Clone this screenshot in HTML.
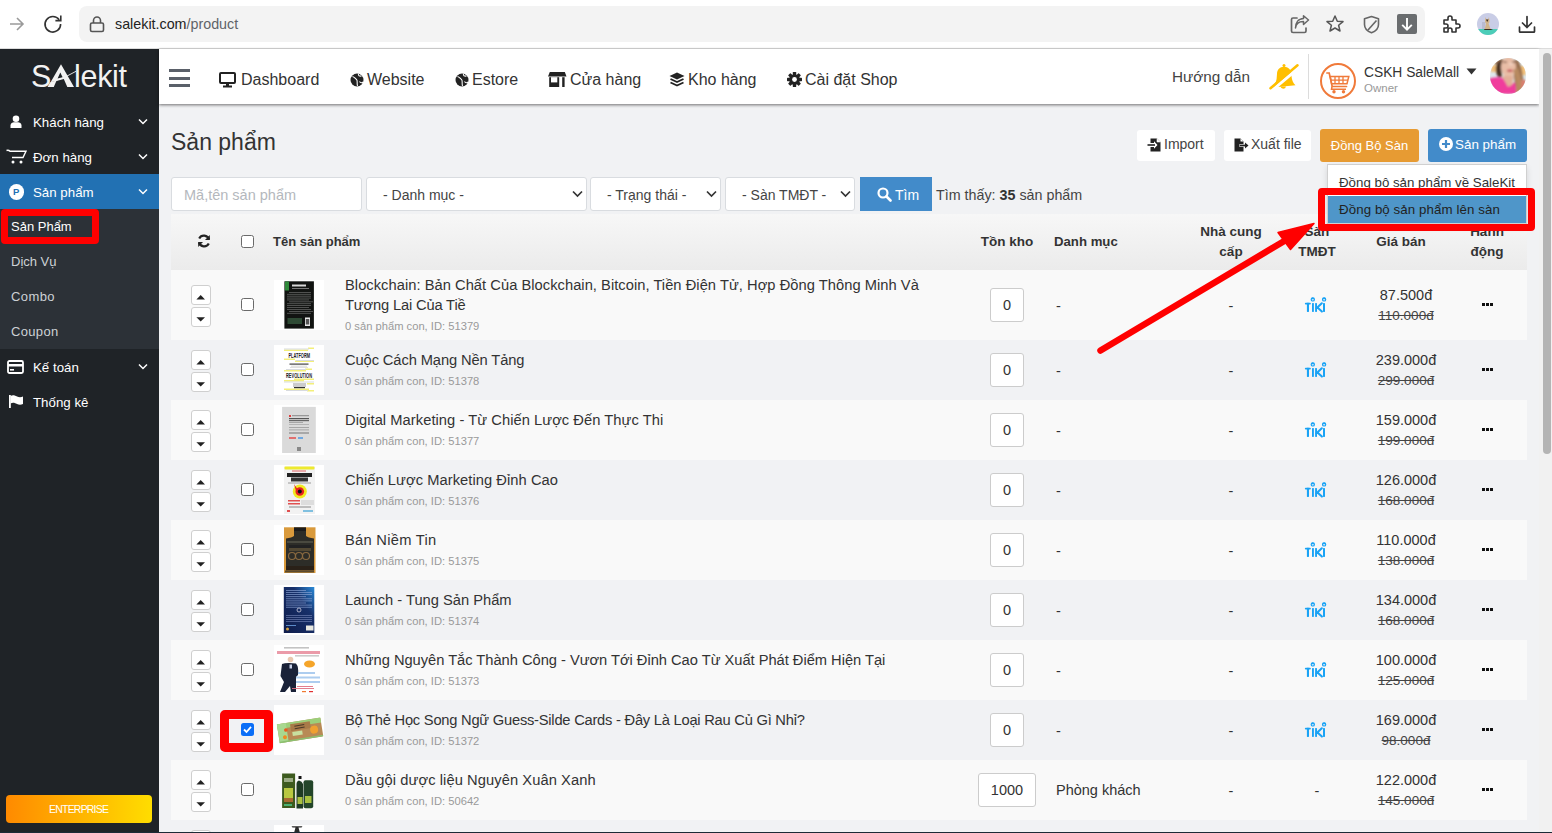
<!DOCTYPE html><html><head><meta charset="utf-8"><style>
*{box-sizing:border-box;margin:0;padding:0}
html,body{width:1552px;height:833px;overflow:hidden;font-family:"Liberation Sans",sans-serif;color:#333;background:#f1f2f4;position:relative}
.a{position:absolute;white-space:nowrap}
svg{display:block}
</style></head><body>
<div class="a" style="left:0;top:0;width:1552px;height:49px;background:#fff;border-bottom:1px solid #dcdcdc"></div>
<div class="a" style="left:79px;top:6px;width:1346px;height:36px;background:#f3f3f3;border-radius:8px"></div>
<svg class="a" style="left:9px;top:16px" width="16" height="16" viewBox="0 0 16 16"><path d="M1 8H14M8 2L14 8L8 14" stroke="#9a9a9a" stroke-width="1.6" fill="none"/></svg>
<svg class="a" style="left:43px;top:14px" width="20" height="20" viewBox="0 0 20 20"><path d="M16.2 5.8A7.8 7.8 0 1 0 17.6 10" stroke="#333" stroke-width="1.6" fill="none"/><path d="M12.4 6.6H17.8V1.4" stroke="#333" stroke-width="1.6" fill="none"/></svg>
<svg class="a" style="left:89px;top:15px" width="16" height="18" viewBox="0 0 16 18"><rect x="1.5" y="8" width="13" height="8.5" rx="1.5" stroke="#555" stroke-width="1.6" fill="none"/><path d="M4.5 8V5.5A3.5 3.5 0 0 1 11.5 5.5V8" stroke="#555" stroke-width="1.6" fill="none"/></svg>
<div class="a" style="left:115px;top:15px;font-size:14.3px;line-height:18px;color:#222">salekit.com<span style="color:#5f6368">/product</span></div>
<svg class="a" style="left:1290px;top:15px" width="20" height="19" viewBox="0 0 20 19"><path d="M7 3H3Q1.5 3 1.5 4.5V16Q1.5 17.5 3 17.5H14.5Q16 17.5 16 16V13" stroke="#666" stroke-width="1.7" fill="none" stroke-linecap="round"/><path d="M5.5 13C6 8.5 9 6.5 13.5 6.5V9.5L18.5 5L13.5 0.8V3.6C8 3.8 5.5 8 5.5 13Z" stroke="#666" stroke-width="1.5" fill="none" stroke-linejoin="round"/></svg>
<svg class="a" style="left:1325px;top:14px" width="20" height="20" viewBox="0 0 20 20"><path d="M10 2L12.3 7.2L18 7.6L13.6 11.3L15 17L10 14L5 17L6.4 11.3L2 7.6L7.7 7.2Z" stroke="#555" stroke-width="1.5" fill="none" stroke-linejoin="round"/></svg>
<svg class="a" style="left:1363px;top:15px" width="18" height="19" viewBox="0 0 18 19"><path d="M8.5 1.5L15.5 3.8V9.5C15.5 13.5 12.5 16.3 8.5 17.8C4.5 16.3 1.5 13.5 1.5 9.5V3.8Z" stroke="#666" stroke-width="1.6" fill="none" stroke-linejoin="round"/><path d="M13.5 5.5L5 15" stroke="#666" stroke-width="1.6"/></svg>
<div class="a" style="left:1397px;top:14px;width:20px;height:20px;background:#6a6d6f;border-radius:2px"></div>
<svg class="a" style="left:1399px;top:16px" width="16" height="16" viewBox="0 0 16 16"><path d="M8 2V13.5M3.2 8.8L8 13.6L12.8 8.8" stroke="#fff" stroke-width="1.9" fill="none"/></svg>
<svg class="a" style="left:1440px;top:13px" width="22" height="22" viewBox="0 0 22 22"><path d="M4 7H8V5A2 2 0 0 1 12 5V7H16V11H18A2 2 0 0 1 18 15H16V19H12V17A2 2 0 0 0 8 17V19H4V15H6A2 2 0 0 0 6 11H4Z" stroke="#333" stroke-width="1.6" fill="none" stroke-linejoin="round"/></svg>
<svg class="a" style="left:1477px;top:13px" width="22" height="22" viewBox="0 0 22 22"><defs><clipPath id="cc"><circle cx="11" cy="11" r="11"/></clipPath></defs><g clip-path="url(#cc)"><rect width="22" height="22" fill="#c9cde6"/><rect y="16" width="22" height="6" fill="#4ccdb8"/><path d="M8.5 4L9.5 6.5H11L12 4L12.5 8Q12.5 10 11.5 10.5L14 17H7.5L9 10.5Q8 10 8 8Z" fill="#d2b48a"/><path d="M9 6.5L10.2 9L11.5 6.5Z" fill="#3a2a1a"/><path d="M7.5 16L14 16L16 17H7Z" fill="#3a2e22"/><rect x="5" y="9" width="3" height="7" fill="#aab" opacity=".5"/></g></svg>
<svg class="a" style="left:1517px;top:15px" width="20" height="19" viewBox="0 0 20 19"><path d="M10 1.5V12.5M5.5 8L10 12.5L14.5 8M2.5 12V16.5Q2.5 17.2 3.2 17.2H16.8Q17.5 17.2 17.5 16.5V12" stroke="#333" stroke-width="1.7" fill="none" stroke-linecap="round" stroke-linejoin="round"/></svg>
<div class="a" style="left:0;top:49px;width:159px;height:784px;background:#1f2327"></div>
<div class="a" style="left:31px;top:59px;font-size:30.5px;line-height:34px;color:#f2f2f2;letter-spacing:-0.3px">S</div>
<div class="a" style="left:74px;top:59px;font-size:30.5px;line-height:34px;color:#f2f2f2;letter-spacing:-0.3px">lekit</div>
<svg class="a" style="left:40px;top:60px" width="40" height="30" viewBox="40 60 40 30"><path d="M61 64.2L74 87L67.3 87L63.8 79L55.5 81.3L51 81.5ZM60.3 72.5L57.6 78.6L62.6 77.3Z" fill="#f2f2f2" fill-rule="evenodd"/><path d="M50.2 82.3L56.6 80.6L53.8 87L47.5 87Z" fill="#f2f2f2"/><path d="M51 81.8Q64 79 76 71.3" stroke="#f2f2f2" stroke-width="0.9" fill="none"/></svg>
<svg class="a" style="left:10px;top:115px" width="12" height="13" viewBox="0 0 12 13"><circle cx="6" cy="3.8" r="3.3" fill="#fff"/><path d="M0.5 13V10.5C0.5 8.3 2.5 7.3 4 7.3H8C9.5 7.3 11.5 8.3 11.5 10.5V13Z" fill="#fff"/></svg>
<div class="a" style="left:33px;top:115px;font-size:13.3px;line-height:16px;color:#fff">Khách hàng</div>
<svg class="a" style="left:138px;top:118px" width="10" height="7" viewBox="0 0 10 7"><path d="M1 1.5L5 5.5L9 1.5" stroke="#fff" stroke-width="1.5" fill="none"/></svg>
<svg class="a" style="left:6px;top:149px" width="21" height="15" viewBox="0 0 21 15"><path d="M0.5 1.5C2 1 3 1.2 4 2.2H20L17 8.5H6" stroke="#fff" stroke-width="1.4" fill="none"/><circle cx="7" cy="13" r="1.5" fill="#fff"/><circle cx="15" cy="13" r="1.5" fill="#fff"/></svg>
<div class="a" style="left:33px;top:150px;font-size:13.3px;line-height:16px;color:#fff">Đơn hàng</div>
<svg class="a" style="left:138px;top:153px" width="10" height="7" viewBox="0 0 10 7"><path d="M1 1.5L5 5.5L9 1.5" stroke="#fff" stroke-width="1.5" fill="none"/></svg>
<div class="a" style="left:0;top:174px;width:159px;height:35px;background:#2271b3"></div>
<div class="a" style="left:8.5px;top:184px;width:15.5px;height:15.5px;border-radius:50%;background:#fff;color:#2271b3;font-size:9.5px;font-weight:bold;line-height:15.5px;text-align:center">P</div>
<div class="a" style="left:33px;top:185px;font-size:13.3px;line-height:16px;color:#fff">Sản phẩm</div>
<svg class="a" style="left:138px;top:188px" width="10" height="7" viewBox="0 0 10 7"><path d="M1 1.5L5 5.5L9 1.5" stroke="#fff" stroke-width="1.5" fill="none"/></svg>
<div class="a" style="left:0;top:209px;width:159px;height:140px;background:#2c3137"></div>
<div class="a" style="left:11px;top:219px;font-size:13px;line-height:16px;color:#fff;letter-spacing:0.00px">Sản Phẩm</div>
<div class="a" style="left:11px;top:254px;font-size:13px;line-height:16px;color:#cdd1d5;letter-spacing:0.00px">Dịch Vụ</div>
<div class="a" style="left:11px;top:289px;font-size:13px;line-height:16px;color:#cdd1d5;letter-spacing:0.42px">Combo</div>
<div class="a" style="left:11px;top:324px;font-size:13px;line-height:16px;color:#cdd1d5;letter-spacing:0.34px">Coupon</div>
<div class="a" style="left:1px;top:209px;width:98px;height:35px;border:7px solid #ff0000;border-radius:4px"></div>
<svg class="a" style="left:7px;top:360px" width="17" height="14" viewBox="0 0 17 14"><rect x="1" y="1" width="15" height="12" rx="1.5" stroke="#fff" stroke-width="1.8" fill="none"/><rect x="1" y="4" width="15" height="2.5" fill="#fff"/><rect x="3" y="9" width="4" height="1.6" fill="#fff"/></svg>
<div class="a" style="left:33px;top:360px;font-size:13.3px;line-height:16px;color:#fff">Kế toán</div>
<svg class="a" style="left:138px;top:363px" width="10" height="7" viewBox="0 0 10 7"><path d="M1 1.5L5 5.5L9 1.5" stroke="#fff" stroke-width="1.5" fill="none"/></svg>
<svg class="a" style="left:8px;top:394px" width="16" height="16" viewBox="0 0 16 16"><rect x="1" y="1" width="1.8" height="13" fill="#fff"/><path d="M2.5 2C5 0.5 7 1.5 9 2.5C11 3.5 13 3.5 15 2.5V10C13 11 11 11 9 10C7 9 5 8 2.5 9.5Z" fill="#fff"/></svg>
<div class="a" style="left:33px;top:395px;font-size:13.3px;line-height:16px;color:#fff">Thống kê</div>
<div class="a" style="left:6px;top:795px;width:146px;height:28px;border-radius:4px;background:linear-gradient(90deg,#ff8a00,#ffdd00);color:#fff;font-size:10.5px;line-height:28px;text-align:center;letter-spacing:-0.8px;text-indent:-0.8px">ENTERPRISE</div>
<div class="a" style="left:159px;top:49px;width:1380px;height:55px;background:#fff;box-shadow:0 1px 3px rgba(0,0,0,.55)"></div>
<div class="a" style="left:169px;top:69px;width:21px;height:3px;background:#5a6069"></div>
<div class="a" style="left:169px;top:77px;width:21px;height:3px;background:#5a6069"></div>
<div class="a" style="left:169px;top:84px;width:21px;height:3px;background:#5a6069"></div>
<div class="a" style="left:219.0px;top:72px"><svg width="17" height="16" viewBox="0 0 17 16"><rect x="1" y="1" width="15" height="10" rx="1" stroke="#222" stroke-width="2" fill="none"/><rect x="7" y="11" width="3" height="3" fill="#222"/><rect x="4" y="13.5" width="9" height="2" fill="#222"/></svg></div>
<div class="a" style="left:241px;top:70px;font-size:16px;line-height:19px;color:#333">Dashboard</div>
<div class="a" style="left:350.0px;top:73px"><svg width="14" height="14" viewBox="0 0 14 14"><circle cx="7" cy="7" r="6.5" fill="#222"/><path d="M2.5 3.5C4.5 4 5 5.5 6.5 6.5C8 7.5 6.5 10 7.5 13M8.5 1C8 2.5 9.5 3.5 11.5 3M9.5 8.5C10.5 10 12 10 13.2 9" stroke="#fff" stroke-width="1.1" fill="none"/></svg></div>
<div class="a" style="left:367px;top:70px;font-size:16px;line-height:19px;color:#333">Website</div>
<div class="a" style="left:455.0px;top:73px"><svg width="14" height="14" viewBox="0 0 14 14"><circle cx="7" cy="7" r="6.5" fill="#222"/><path d="M2.5 3.5C4.5 4 5 5.5 6.5 6.5C8 7.5 6.5 10 7.5 13M8.5 1C8 2.5 9.5 3.5 11.5 3M9.5 8.5C10.5 10 12 10 13.2 9" stroke="#fff" stroke-width="1.1" fill="none"/></svg></div>
<div class="a" style="left:472px;top:70px;font-size:16px;line-height:19px;color:#333">Estore</div>
<div class="a" style="left:547.5px;top:72px"><svg width="19" height="15" viewBox="0 0 19 15"><path d="M1.8 0H16.8L18.5 4.5H0Z" fill="#222"/><rect x="1.2" y="5.2" width="10" height="9.8" fill="#222"/><rect x="3" y="5.2" width="6.3" height="5.2" fill="#fff"/><rect x="14.2" y="5.2" width="2.4" height="9.8" fill="#222"/></svg></div>
<div class="a" style="left:570px;top:70px;font-size:16px;line-height:19px;color:#333">Cửa hàng</div>
<div class="a" style="left:669.0px;top:72px"><svg width="16" height="15" viewBox="0 0 16 15"><path d="M8 0.5L15.5 4L8 7.5L0.5 4Z" fill="#222"/><path d="M1.5 7L8 10L14.5 7M1.5 10.5L8 13.5L14.5 10.5" stroke="#222" stroke-width="1.9" fill="none" stroke-linejoin="round"/></svg></div>
<div class="a" style="left:688px;top:70px;font-size:16px;line-height:19px;color:#333">Kho hàng</div>
<div class="a" style="left:786.5px;top:72px"><svg width="15" height="15" viewBox="0 0 15 15"><g fill="#222"><circle cx="7.5" cy="7.5" r="5.3"/><rect x="5.8" y="0" width="3.4" height="3.5" rx="0.6" transform="rotate(0 7.5 7.5)"/><rect x="5.8" y="0" width="3.4" height="3.5" rx="0.6" transform="rotate(45 7.5 7.5)"/><rect x="5.8" y="0" width="3.4" height="3.5" rx="0.6" transform="rotate(90 7.5 7.5)"/><rect x="5.8" y="0" width="3.4" height="3.5" rx="0.6" transform="rotate(135 7.5 7.5)"/><rect x="5.8" y="0" width="3.4" height="3.5" rx="0.6" transform="rotate(180 7.5 7.5)"/><rect x="5.8" y="0" width="3.4" height="3.5" rx="0.6" transform="rotate(225 7.5 7.5)"/><rect x="5.8" y="0" width="3.4" height="3.5" rx="0.6" transform="rotate(270 7.5 7.5)"/><rect x="5.8" y="0" width="3.4" height="3.5" rx="0.6" transform="rotate(315 7.5 7.5)"/></g><circle cx="7.5" cy="7.5" r="2.4" fill="#fff"/></svg></div>
<div class="a" style="left:805px;top:70px;font-size:16px;line-height:19px;color:#333">Cài đặt Shop</div>
<div class="a" style="left:1172px;top:68px;font-size:15.3px;line-height:18px;color:#444">Hướng dẫn</div>
<svg class="a" style="left:1264px;top:60px" width="40" height="34" viewBox="0 0 40 34"><circle cx="20" cy="5.6" r="1.5" fill="#ffbf00"/><path d="M20 6.8C15.6 6.8 13.2 10 13 13.8L12.6 19C12.2 22.5 10 25 6.5 27.8L31.5 25.3C29 23 28 20 27.6 17L27.2 13.8C27 10 24.4 6.8 20 6.8Z" fill="#ffbf00"/><path d="M16.4 26.6A2.9 2.9 0 0 0 22 26.4Z" fill="#ffbf00"/><path d="M8.3 30.1L35.3 7.2" stroke="#fff" stroke-width="3.2"/><path d="M6.5 28.2L33.5 5.3" stroke="#ffbf00" stroke-width="2.5" stroke-linecap="round"/></svg>
<div class="a" style="left:1308px;top:54px;width:1px;height:45px;background:#dcdcdc"></div>
<div class="a" style="left:1320px;top:63px;width:36px;height:36px;border:2px solid #f07a3a;border-radius:50%"></div>
<svg class="a" style="left:1326px;top:71px" width="24" height="23" viewBox="0 0 24 23"><path d="M0.8 2H3.2L6.2 15.5H20.5" stroke="#f07a3a" stroke-width="1.7" fill="none" stroke-linecap="round"/><path d="M4.2 5.5H22.8L21 12.8H5.6Z" stroke="#f07a3a" stroke-width="1.5" fill="none"/><path d="M4.8 9.2H22M9 5.5V12.8M13 5.5V12.8M17 5.5V12.8" stroke="#f07a3a" stroke-width="1.3"/><path d="M6 15.5L5.5 18.3H20" stroke="#f07a3a" stroke-width="1.5" fill="none"/><circle cx="8" cy="20.8" r="1.7" fill="#f07a3a"/><circle cx="17.5" cy="20.8" r="1.7" fill="#f07a3a"/></svg>
<div class="a" style="left:1364px;top:64px;font-size:13.8px;line-height:17px;color:#333">CSKH SaleMall</div>
<div class="a" style="left:1364px;top:82px;font-size:11.5px;line-height:13px;color:#999">Owner</div>
<svg class="a" style="left:1466px;top:68px" width="11" height="7" viewBox="0 0 11 7"><path d="M0.5 0.5H10.5L5.5 6.5Z" fill="#333"/></svg>
<svg class="a" style="left:1490px;top:58px" width="36" height="36" viewBox="0 0 36 36"><defs><clipPath id="avc"><circle cx="18" cy="18" r="18"/></clipPath><filter id="bl"><feGaussianBlur stdDeviation="0.9"/></filter></defs><g clip-path="url(#avc)"><rect width="36" height="36" fill="#dfe9ec"/><g filter="url(#bl)"><rect x="1" y="7" width="5" height="7" fill="#f3c07a"/><rect x="30" y="8" width="6" height="9" fill="#f5c27a"/><path d="M4 6Q6 1 12 1L28 2Q32 8 33 20L36 30L36 36H26L24 18L22 8Z" fill="#9a7050"/><path d="M6 8Q8 3 12 2Q11 10 12 19L8 19Q5 14 6 8Z" fill="#4a3022"/><ellipse cx="18.5" cy="9" rx="7.5" ry="10.5" fill="#e9bda6"/><ellipse cx="19.8" cy="12.7" rx="3" ry="1.2" fill="#c8505a"/><ellipse cx="21" cy="6" rx="2" ry="1.6" fill="#f2d2c0"/><rect x="13" y="3.5" width="4" height="1.2" fill="#7a5a4a"/><rect x="22" y="3.5" width="4" height="1.2" fill="#7a5a4a"/><path d="M-2 21Q6 18 13 20L19 28L25 24L27 36H-2Z" fill="#f03c9c"/><path d="M12 18L24 18L22 27L18 29Z" fill="#e2b098"/><path d="M23 12Q27 20 26 36H33Q33 24 28 10Z" fill="#b88a60"/><rect x="31" y="22" width="5" height="9" fill="#d98070"/></g></g></svg>
<div class="a" style="left:1539px;top:49px;width:13px;height:784px;background:#f1f1f1"></div>
<div class="a" style="left:1543px;top:53px;width:8px;height:401px;background:#b4b4b4;border-radius:4px"></div>
<div class="a" style="left:171px;top:128px;font-size:23px;line-height:28px;color:#333">Sản phẩm</div>
<div class="a" style="left:1137px;top:130px;width:78px;height:31px;background:#fff;border-radius:3px"></div>
<svg class="a" style="left:1147px;top:137.5px" width="15" height="14" viewBox="0 0 15 14"><path d="M3.5 0.5H10L13.5 4V13.5H3.5V9H7V10.8L10.5 7L7 3.2V5H3.5Z" fill="#222"/><path d="M10 0.5V4H13.5" fill="#fff" stroke="#fff" stroke-width=".6"/><path d="M0.5 7H8" stroke="#222" stroke-width="1.6"/></svg>
<div class="a" style="left:1164px;top:136px;font-size:14px;line-height:16px;color:#444">Import</div>
<div class="a" style="left:1224px;top:130px;width:87px;height:31px;background:#fff;border-radius:3px"></div>
<svg class="a" style="left:1234px;top:137.5px" width="15" height="14" viewBox="0 0 15 14"><path d="M0.5 0.5H6.5L9.5 3.5V6H5.5V9H9.5V13.5H0.5Z" fill="#222"/><path d="M6.5 0.5V3.5H9.5" fill="#fff"/><path d="M6 7.5H12" stroke="#222" stroke-width="1.8"/><path d="M11 4.5L14.5 7.5L11 10.5Z" fill="#222"/></svg>
<div class="a" style="left:1251px;top:136px;font-size:14px;line-height:16px;color:#444">Xuất file</div>
<div class="a" style="left:1320px;top:129px;width:99px;height:33px;background:#e79b33;border-radius:3px;color:#fff;font-size:13px;line-height:33px;text-align:center">Đồng Bộ Sàn</div>
<div class="a" style="left:1428px;top:129px;width:99px;height:33px;background:#428bca;border-radius:3px"></div>
<svg class="a" style="left:1439px;top:137px" width="14" height="14" viewBox="0 0 14 14"><circle cx="7" cy="7" r="7" fill="#fff"/><path d="M7 3V11M3 7H11" stroke="#428bca" stroke-width="2.2"/></svg>
<div class="a" style="left:1455px;top:137px;font-size:13.4px;line-height:16px;color:#fff">Sản phẩm</div>
<div class="a" style="left:171px;top:177px;width:191px;height:34px;background:#fff;border:1px solid #d9dce0;border-radius:3px"></div>
<div class="a" style="left:184px;top:187px;font-size:14.5px;line-height:17px;color:#b4b8bd">Mã,tên sản phẩm</div>
<div class="a" style="left:366px;top:177px;width:221px;height:34px;background:#fff;border:1px solid #d9dce0;border-radius:3px"></div>
<div class="a" style="left:383px;top:187px;font-size:14px;line-height:17px;color:#444">- Danh mục -</div>
<svg class="a" style="left:572px;top:190px" width="11" height="8" viewBox="0 0 11 8"><path d="M1 1.5L5.5 6L10 1.5" stroke="#333" stroke-width="1.7" fill="none"/></svg>
<div class="a" style="left:590px;top:177px;width:131px;height:34px;background:#fff;border:1px solid #d9dce0;border-radius:3px"></div>
<div class="a" style="left:607px;top:187px;font-size:14px;line-height:17px;color:#444">- Trạng thái -</div>
<svg class="a" style="left:706px;top:190px" width="11" height="8" viewBox="0 0 11 8"><path d="M1 1.5L5.5 6L10 1.5" stroke="#333" stroke-width="1.7" fill="none"/></svg>
<div class="a" style="left:725px;top:177px;width:130px;height:34px;background:#fff;border:1px solid #d9dce0;border-radius:3px"></div>
<div class="a" style="left:742px;top:187px;font-size:14px;line-height:17px;color:#444">- Sàn TMĐT -</div>
<svg class="a" style="left:840px;top:190px" width="11" height="8" viewBox="0 0 11 8"><path d="M1 1.5L5.5 6L10 1.5" stroke="#333" stroke-width="1.7" fill="none"/></svg>
<div class="a" style="left:860px;top:177px;width:72px;height:34px;background:#428bca"></div>
<svg class="a" style="left:877px;top:187px" width="15" height="15" viewBox="0 0 15 15"><circle cx="6" cy="6" r="4.5" stroke="#fff" stroke-width="2.2" fill="none"/><path d="M9.5 9.5L13.5 13.5" stroke="#fff" stroke-width="2.6" stroke-linecap="round"/></svg>
<div class="a" style="left:895px;top:187px;font-size:14px;line-height:17px;color:#fff">Tìm</div>
<div class="a" style="left:936px;top:187px;font-size:14.3px;line-height:17px;color:#444">Tìm thấy: <b style="color:#333">35</b> sản phẩm</div>
<div class="a" style="left:171px;top:214px;width:1356px;height:56px;background:linear-gradient(#f7f7f7,#ebebeb)"></div>
<svg class="a" style="left:197px;top:234px" width="14" height="14" viewBox="0 0 14 14"><path d="M12 5.5A5.3 5.3 0 0 0 2.2 4.5" stroke="#222" stroke-width="2.2" fill="none"/><path d="M12.8 1V6H8Z" fill="#222"/><path d="M2 8.5A5.3 5.3 0 0 0 11.8 9.5" stroke="#222" stroke-width="2.2" fill="none"/><path d="M1.2 13V8H6Z" fill="#222"/></svg>
<div class="a" style="left:241px;top:235px;width:13px;height:13px;background:#fff;border:1px solid #6a6a6a;border-radius:2.5px"></div>
<div class="a" style="left:273px;top:234px;font-size:13px;font-weight:bold;line-height:16px;color:#333">Tên sản phẩm</div>
<div class="a" style="left:947px;top:234px;width:120px;font-size:13.5px;font-weight:bold;line-height:16px;color:#333;text-align:center">Tồn kho</div>
<div class="a" style="left:1054px;top:234px;font-size:13.2px;font-weight:bold;line-height:16px;color:#333">Danh mục</div>
<div class="a" style="left:1171px;top:222px;width:120px;font-size:13.5px;font-weight:bold;line-height:20px;color:#333;text-align:center;white-space:normal">Nhà cung<br>cấp</div>
<div class="a" style="left:1257px;top:222px;width:120px;font-size:13.5px;font-weight:bold;line-height:20px;color:#333;text-align:center;white-space:normal">Sàn<br>TMĐT</div>
<div class="a" style="left:1341px;top:234px;width:120px;font-size:13.5px;font-weight:bold;line-height:16px;color:#333;text-align:center">Giá bán</div>
<div class="a" style="left:1427px;top:222px;width:120px;font-size:13.5px;font-weight:bold;line-height:20px;color:#333;text-align:center;white-space:normal">Hành<br>động</div>
<div class="a" style="left:171px;top:270px;width:1356px;height:70px;background:#f9f9f9"></div>
<div class="a" style="left:191px;top:285px;width:20px;height:20px;background:#fff;border:1px solid #cfcfcf;border-radius:3px"></div>
<svg class="a" style="left:194px;top:294.8px" width="14" height="6" viewBox="0 0 14 6"><path d="M2.4 4.4L6.7 0.1L11 4.4Z" fill="#222"/></svg>
<div class="a" style="left:191px;top:307px;width:20px;height:20px;background:#fff;border:1px solid #cfcfcf;border-radius:3px"></div>
<svg class="a" style="left:194px;top:316.8px" width="14" height="6" viewBox="0 0 14 6"><path d="M2.4 0.2L6.7 4.6L11 0.2Z" fill="#222"/></svg>
<div class="a" style="left:241px;top:298px;width:13px;height:13px;background:#fff;border:1px solid #6a6a6a;border-radius:2.5px"></div>
<svg class="a" style="left:274px;top:280px" width="50" height="50" viewBox="0 0 50 50"><rect width="50" height="50" fill="#fff"/><rect x="10.4" y="1.3" width="29.5" height="47.3" fill="#121412"/><rect x="11" y="1.5" width="4" height="9" fill="#2f8a3a"/><rect x="18" y="4.5" width="14" height="2" fill="#d8d8d8"/><rect x="18" y="8" width="17" height="1" fill="#777"/><rect x="15.0" y="12.0" width="22.0" height="0.7" fill="#8a8a8a" opacity=".75"/><rect x="13.0" y="13.9" width="24.0" height="0.7" fill="#8a8a8a" opacity=".75"/><rect x="13.0" y="15.8" width="24.0" height="0.7" fill="#8a8a8a" opacity=".75"/><rect x="13.0" y="17.7" width="24.0" height="0.7" fill="#8a8a8a" opacity=".75"/><rect x="13.0" y="19.6" width="22.0" height="0.7" fill="#8a8a8a" opacity=".75"/><rect x="15.0" y="21.5" width="24.0" height="0.7" fill="#8a8a8a" opacity=".75"/><rect x="13.0" y="23.4" width="24.0" height="0.7" fill="#8a8a8a" opacity=".75"/><rect x="13.0" y="25.3" width="24.0" height="0.7" fill="#8a8a8a" opacity=".75"/><rect x="13.0" y="27.2" width="22.0" height="0.7" fill="#8a8a8a" opacity=".75"/><rect x="13.0" y="29.1" width="24.0" height="0.7" fill="#8a8a8a" opacity=".75"/><rect x="15.0" y="31.0" width="24.0" height="0.7" fill="#8a8a8a" opacity=".75"/><rect x="13.0" y="32.9" width="24.0" height="0.7" fill="#8a8a8a" opacity=".75"/><rect x="13.5" y="38" width="14.5" height="6" fill="#2e4a34"/><rect x="31" y="37.5" width="5" height="8.5" fill="#e8e8e8"/><rect x="31.8" y="39" width="3.4" height="5.5" fill="#555"/></svg>
<div class="a" style="left:345px;top:275px;font-size:14.7px;line-height:20px;color:#333"><span style="letter-spacing:0.037px">Blockchain: Bản Chất Của Blockchain, Bitcoin, Tiền Điện Tử, Hợp Đồng Thông Minh Và</span><br><span style="letter-spacing:-0.156px">Tương Lai Của Tiề</span></div>
<div class="a" style="left:345px;top:319px;font-size:11.2px;line-height:14px;color:#999">0 sản phẩm con, ID: 51379</div>
<div class="a" style="left:990px;top:288px;width:34px;height:33.5px;background:#fff;border:1px solid #cccccc;border-radius:3px;font-size:14.5px;line-height:32px;text-align:center;color:#333">0</div>
<div class="a" style="left:1056px;top:298px;font-size:14.5px;line-height:17px;color:#333">-</div>
<div class="a" style="left:1221px;top:298px;width:20px;text-align:center;font-size:14.5px;line-height:17px;color:#333">-</div>
<svg class="a" style="left:1303px;top:296px" width="24" height="17" viewBox="0 0 24 17"><g fill="#1aa3f5"><rect x="1.9" y="6.8" width="5.9" height="1.8" rx=".8"/><rect x="3.9" y="6.8" width="2.1" height="9.1" rx=".6"/><rect x="9" y="7" width="1.9" height="8.9" rx=".6"/><rect x="12.1" y="7" width="1.9" height="8.9" rx=".6"/><rect x="20" y="7" width="2" height="8.9" rx=".6"/></g><path d="M13.5 12.2L18.8 7.2M14.2 11.3L18.9 15.6" stroke="#1aa3f5" stroke-width="2" stroke-linecap="round"/><circle cx="9.8" cy="3.4" r="1.6" stroke="#1aa3f5" stroke-width="1.2" fill="none"/><circle cx="21.1" cy="3.4" r="1.6" stroke="#1aa3f5" stroke-width="1.2" fill="none"/><path d="M8.2 3.2A1.6 1.6 0 0 1 11.4 3.2ZM19.5 3.2A1.6 1.6 0 0 1 22.7 3.2Z" fill="#1aa3f5"/></svg>
<div class="a" style="left:1346px;top:287px;width:120px;text-align:center;font-size:14.5px;line-height:17px;color:#333">87.500đ</div>
<div class="a" style="left:1346px;top:308px;width:120px;text-align:center;font-size:13.5px;line-height:16px;color:#444;text-decoration:line-through">110.000đ</div>
<div class="a" style="left:1481.5px;top:302.7px;width:3px;height:3.3px;background:#111"></div>
<div class="a" style="left:1485.5px;top:302.7px;width:3px;height:3.3px;background:#111"></div>
<div class="a" style="left:1489.5px;top:302.7px;width:3px;height:3.3px;background:#111"></div>
<div class="a" style="left:191px;top:350px;width:20px;height:20px;background:#fff;border:1px solid #cfcfcf;border-radius:3px"></div>
<svg class="a" style="left:194px;top:359.8px" width="14" height="6" viewBox="0 0 14 6"><path d="M2.4 4.4L6.7 0.1L11 4.4Z" fill="#222"/></svg>
<div class="a" style="left:191px;top:372px;width:20px;height:20px;background:#fff;border:1px solid #cfcfcf;border-radius:3px"></div>
<svg class="a" style="left:194px;top:381.8px" width="14" height="6" viewBox="0 0 14 6"><path d="M2.4 0.2L6.7 4.6L11 0.2Z" fill="#222"/></svg>
<div class="a" style="left:241px;top:363px;width:13px;height:13px;background:#fff;border:1px solid #6a6a6a;border-radius:2.5px"></div>
<svg class="a" style="left:274px;top:345px" width="50" height="50" viewBox="0 0 50 50"><rect width="50" height="50" fill="#fff"/><rect x="10.0" y="4.5" width="24.0" height="1.5" fill="#f3ef7a"/><rect x="34.0" y="2.5" width="6.0" height="1.5" fill="#f3ef7a"/><rect x="10.0" y="13.5" width="11.0" height="1.5" fill="#f3ef7a"/><rect x="21.0" y="15.5" width="19.0" height="1.5" fill="#f3ef7a"/><rect x="10.0" y="25.0" width="22.0" height="1.5" fill="#f3ef7a"/><rect x="31.0" y="23.5" width="7.0" height="1.5" fill="#f3ef7a"/><rect x="10.0" y="35.0" width="20.0" height="1.5" fill="#f3ef7a"/><rect x="20.0" y="33.5" width="20.0" height="1.5" fill="#f3ef7a"/><rect x="10.0" y="43.5" width="25.0" height="1.5" fill="#f3ef7a"/><rect x="33.0" y="45.0" width="7.0" height="1.5" fill="#f3ef7a"/><rect x="33.0" y="38.0" width="7.0" height="1.5" fill="#f3ef7a"/><rect x="10.0" y="3.5" width="25.0" height="1" fill="#d8dbe0"/><rect x="22.0" y="15.0" width="18.0" height="1" fill="#d8dbe0"/><rect x="12.0" y="24.0" width="20.0" height="1" fill="#d8dbe0"/><rect x="10.0" y="36.5" width="30.0" height="1" fill="#d8dbe0"/><rect x="12.0" y="45.0" width="22.0" height="1" fill="#d8dbe0"/><text x="14.5" y="12.6" font-family="Liberation Sans" font-size="6.5" font-weight="bold" fill="#1a1a1a" textLength="21.5" lengthAdjust="spacingAndGlyphs">PLATFORM</text><rect x="15.5" y="18.5" width="19" height="1.2" fill="#444"/><rect x="17" y="20.8" width="16" height="0.6" fill="#bbb"/><rect x="16" y="22.2" width="18" height="0.6" fill="#ccc"/><text x="12" y="32.6" font-family="Liberation Sans" font-size="6.5" font-weight="bold" fill="#1a1a1a" textLength="26" lengthAdjust="spacingAndGlyphs">REVOLUTION</text><rect x="19" y="38.5" width="13" height="1" fill="#999"/><rect x="19" y="40.5" width="13" height="1" fill="#999"/><rect x="20" y="42" width="11" height="1.2" fill="#333"/></svg>
<div class="a" style="left:345px;top:350px;font-size:14.7px;line-height:20px;color:#333;letter-spacing:-0.105px">Cuộc Cách Mạng Nền Tảng</div>
<div class="a" style="left:345px;top:374px;font-size:11.2px;line-height:14px;color:#999">0 sản phẩm con, ID: 51378</div>
<div class="a" style="left:990px;top:353px;width:34px;height:33.5px;background:#fff;border:1px solid #cccccc;border-radius:3px;font-size:14.5px;line-height:32px;text-align:center;color:#333">0</div>
<div class="a" style="left:1056px;top:363px;font-size:14.5px;line-height:17px;color:#333">-</div>
<div class="a" style="left:1221px;top:363px;width:20px;text-align:center;font-size:14.5px;line-height:17px;color:#333">-</div>
<svg class="a" style="left:1303px;top:361px" width="24" height="17" viewBox="0 0 24 17"><g fill="#1aa3f5"><rect x="1.9" y="6.8" width="5.9" height="1.8" rx=".8"/><rect x="3.9" y="6.8" width="2.1" height="9.1" rx=".6"/><rect x="9" y="7" width="1.9" height="8.9" rx=".6"/><rect x="12.1" y="7" width="1.9" height="8.9" rx=".6"/><rect x="20" y="7" width="2" height="8.9" rx=".6"/></g><path d="M13.5 12.2L18.8 7.2M14.2 11.3L18.9 15.6" stroke="#1aa3f5" stroke-width="2" stroke-linecap="round"/><circle cx="9.8" cy="3.4" r="1.6" stroke="#1aa3f5" stroke-width="1.2" fill="none"/><circle cx="21.1" cy="3.4" r="1.6" stroke="#1aa3f5" stroke-width="1.2" fill="none"/><path d="M8.2 3.2A1.6 1.6 0 0 1 11.4 3.2ZM19.5 3.2A1.6 1.6 0 0 1 22.7 3.2Z" fill="#1aa3f5"/></svg>
<div class="a" style="left:1346px;top:352px;width:120px;text-align:center;font-size:14.5px;line-height:17px;color:#333">239.000đ</div>
<div class="a" style="left:1346px;top:373px;width:120px;text-align:center;font-size:13.5px;line-height:16px;color:#444;text-decoration:line-through">299.000đ</div>
<div class="a" style="left:1481.5px;top:367.7px;width:3px;height:3.3px;background:#111"></div>
<div class="a" style="left:1485.5px;top:367.7px;width:3px;height:3.3px;background:#111"></div>
<div class="a" style="left:1489.5px;top:367.7px;width:3px;height:3.3px;background:#111"></div>
<div class="a" style="left:171px;top:400px;width:1356px;height:60px;background:#f9f9f9"></div>
<div class="a" style="left:191px;top:410px;width:20px;height:20px;background:#fff;border:1px solid #cfcfcf;border-radius:3px"></div>
<svg class="a" style="left:194px;top:419.8px" width="14" height="6" viewBox="0 0 14 6"><path d="M2.4 4.4L6.7 0.1L11 4.4Z" fill="#222"/></svg>
<div class="a" style="left:191px;top:432px;width:20px;height:20px;background:#fff;border:1px solid #cfcfcf;border-radius:3px"></div>
<svg class="a" style="left:194px;top:441.8px" width="14" height="6" viewBox="0 0 14 6"><path d="M2.4 0.2L6.7 4.6L11 0.2Z" fill="#222"/></svg>
<div class="a" style="left:241px;top:423px;width:13px;height:13px;background:#fff;border:1px solid #6a6a6a;border-radius:2.5px"></div>
<svg class="a" style="left:274px;top:405px" width="50" height="50" viewBox="0 0 50 50"><rect width="50" height="50" fill="#fff"/><rect x="8.1" y="1.9" width="33.7" height="46.1" fill="#dadada"/><rect x="15" y="10" width="2" height="2" fill="#e04040"/><rect x="18" y="10.2" width="17" height="1" fill="#888"/><rect x="15" y="13" width="20" height="1.2" fill="#555"/><rect x="15" y="15" width="20" height="1.2" fill="#666"/><rect x="15" y="17" width="14" height="0.8" fill="#999"/><rect x="15" y="19" width="20" height="0.8" fill="#aaa"/><rect x="15" y="22" width="20" height="0.8" fill="#999"/><rect x="15" y="24.5" width="20" height="0.8" fill="#999"/><rect x="15" y="27.5" width="20" height="1" fill="#777"/><rect x="15" y="32" width="7" height="2" fill="#e07070"/><rect x="24" y="32" width="5" height="2" fill="#70a8e0"/><rect x="23" y="42" width="4" height="4" fill="#888"/></svg>
<div class="a" style="left:345px;top:410px;font-size:14.7px;line-height:20px;color:#333;letter-spacing:0.053px">Digital Marketing - Từ Chiến Lược Đến Thực Thi</div>
<div class="a" style="left:345px;top:434px;font-size:11.2px;line-height:14px;color:#999">0 sản phẩm con, ID: 51377</div>
<div class="a" style="left:990px;top:413px;width:34px;height:33.5px;background:#fff;border:1px solid #cccccc;border-radius:3px;font-size:14.5px;line-height:32px;text-align:center;color:#333">0</div>
<div class="a" style="left:1056px;top:423px;font-size:14.5px;line-height:17px;color:#333">-</div>
<div class="a" style="left:1221px;top:423px;width:20px;text-align:center;font-size:14.5px;line-height:17px;color:#333">-</div>
<svg class="a" style="left:1303px;top:421px" width="24" height="17" viewBox="0 0 24 17"><g fill="#1aa3f5"><rect x="1.9" y="6.8" width="5.9" height="1.8" rx=".8"/><rect x="3.9" y="6.8" width="2.1" height="9.1" rx=".6"/><rect x="9" y="7" width="1.9" height="8.9" rx=".6"/><rect x="12.1" y="7" width="1.9" height="8.9" rx=".6"/><rect x="20" y="7" width="2" height="8.9" rx=".6"/></g><path d="M13.5 12.2L18.8 7.2M14.2 11.3L18.9 15.6" stroke="#1aa3f5" stroke-width="2" stroke-linecap="round"/><circle cx="9.8" cy="3.4" r="1.6" stroke="#1aa3f5" stroke-width="1.2" fill="none"/><circle cx="21.1" cy="3.4" r="1.6" stroke="#1aa3f5" stroke-width="1.2" fill="none"/><path d="M8.2 3.2A1.6 1.6 0 0 1 11.4 3.2ZM19.5 3.2A1.6 1.6 0 0 1 22.7 3.2Z" fill="#1aa3f5"/></svg>
<div class="a" style="left:1346px;top:412px;width:120px;text-align:center;font-size:14.5px;line-height:17px;color:#333">159.000đ</div>
<div class="a" style="left:1346px;top:433px;width:120px;text-align:center;font-size:13.5px;line-height:16px;color:#444;text-decoration:line-through">199.000đ</div>
<div class="a" style="left:1481.5px;top:427.7px;width:3px;height:3.3px;background:#111"></div>
<div class="a" style="left:1485.5px;top:427.7px;width:3px;height:3.3px;background:#111"></div>
<div class="a" style="left:1489.5px;top:427.7px;width:3px;height:3.3px;background:#111"></div>
<div class="a" style="left:191px;top:470px;width:20px;height:20px;background:#fff;border:1px solid #cfcfcf;border-radius:3px"></div>
<svg class="a" style="left:194px;top:479.8px" width="14" height="6" viewBox="0 0 14 6"><path d="M2.4 4.4L6.7 0.1L11 4.4Z" fill="#222"/></svg>
<div class="a" style="left:191px;top:492px;width:20px;height:20px;background:#fff;border:1px solid #cfcfcf;border-radius:3px"></div>
<svg class="a" style="left:194px;top:501.8px" width="14" height="6" viewBox="0 0 14 6"><path d="M2.4 0.2L6.7 4.6L11 0.2Z" fill="#222"/></svg>
<div class="a" style="left:241px;top:483px;width:13px;height:13px;background:#fff;border:1px solid #6a6a6a;border-radius:2.5px"></div>
<svg class="a" style="left:274px;top:465px" width="50" height="50" viewBox="0 0 50 50"><rect width="50" height="50" fill="#fff"/><rect x="10" y="1.5" width="31" height="47.5" fill="#f2f2f2"/><rect x="10.5" y="1.5" width="30" height="3" rx="1" fill="#eeea30"/><rect x="18" y="5.5" width="14" height="1" fill="#e06060"/><rect x="13" y="8" width="25" height="4" fill="#222"/><rect x="17" y="12.5" width="17" height="4" fill="#333"/><rect x="14" y="17.5" width="23" height="1" fill="#999"/><circle cx="25.8" cy="26.5" r="7" fill="#f0ea20"/><circle cx="25.8" cy="26.5" r="4.3" fill="#e82020"/><circle cx="25.8" cy="26.5" r="2" fill="#111"/><path d="M20 19L24 25L22 26Z" fill="#e82020"/><rect x="14" y="35" width="12" height="1.5" fill="#e05050"/><rect x="14" y="38" width="12" height="1.5" fill="#e05050"/><rect x="27" y="35" width="13" height="5" fill="#ddd"/><rect x="15" y="41.5" width="22" height="1" fill="#888"/><rect x="13" y="45" width="3" height="2" fill="#e05050"/><rect x="29" y="45" width="10" height="2" fill="#80c0e0"/></svg>
<div class="a" style="left:345px;top:470px;font-size:14.7px;line-height:20px;color:#333;letter-spacing:0.061px">Chiến Lược Marketing Đỉnh Cao</div>
<div class="a" style="left:345px;top:494px;font-size:11.2px;line-height:14px;color:#999">0 sản phẩm con, ID: 51376</div>
<div class="a" style="left:990px;top:473px;width:34px;height:33.5px;background:#fff;border:1px solid #cccccc;border-radius:3px;font-size:14.5px;line-height:32px;text-align:center;color:#333">0</div>
<div class="a" style="left:1056px;top:483px;font-size:14.5px;line-height:17px;color:#333">-</div>
<div class="a" style="left:1221px;top:483px;width:20px;text-align:center;font-size:14.5px;line-height:17px;color:#333">-</div>
<svg class="a" style="left:1303px;top:481px" width="24" height="17" viewBox="0 0 24 17"><g fill="#1aa3f5"><rect x="1.9" y="6.8" width="5.9" height="1.8" rx=".8"/><rect x="3.9" y="6.8" width="2.1" height="9.1" rx=".6"/><rect x="9" y="7" width="1.9" height="8.9" rx=".6"/><rect x="12.1" y="7" width="1.9" height="8.9" rx=".6"/><rect x="20" y="7" width="2" height="8.9" rx=".6"/></g><path d="M13.5 12.2L18.8 7.2M14.2 11.3L18.9 15.6" stroke="#1aa3f5" stroke-width="2" stroke-linecap="round"/><circle cx="9.8" cy="3.4" r="1.6" stroke="#1aa3f5" stroke-width="1.2" fill="none"/><circle cx="21.1" cy="3.4" r="1.6" stroke="#1aa3f5" stroke-width="1.2" fill="none"/><path d="M8.2 3.2A1.6 1.6 0 0 1 11.4 3.2ZM19.5 3.2A1.6 1.6 0 0 1 22.7 3.2Z" fill="#1aa3f5"/></svg>
<div class="a" style="left:1346px;top:472px;width:120px;text-align:center;font-size:14.5px;line-height:17px;color:#333">126.000đ</div>
<div class="a" style="left:1346px;top:493px;width:120px;text-align:center;font-size:13.5px;line-height:16px;color:#444;text-decoration:line-through">168.000đ</div>
<div class="a" style="left:1481.5px;top:487.7px;width:3px;height:3.3px;background:#111"></div>
<div class="a" style="left:1485.5px;top:487.7px;width:3px;height:3.3px;background:#111"></div>
<div class="a" style="left:1489.5px;top:487.7px;width:3px;height:3.3px;background:#111"></div>
<div class="a" style="left:171px;top:520px;width:1356px;height:60px;background:#f9f9f9"></div>
<div class="a" style="left:191px;top:530px;width:20px;height:20px;background:#fff;border:1px solid #cfcfcf;border-radius:3px"></div>
<svg class="a" style="left:194px;top:539.8px" width="14" height="6" viewBox="0 0 14 6"><path d="M2.4 4.4L6.7 0.1L11 4.4Z" fill="#222"/></svg>
<div class="a" style="left:191px;top:552px;width:20px;height:20px;background:#fff;border:1px solid #cfcfcf;border-radius:3px"></div>
<svg class="a" style="left:194px;top:561.8px" width="14" height="6" viewBox="0 0 14 6"><path d="M2.4 0.2L6.7 4.6L11 0.2Z" fill="#222"/></svg>
<div class="a" style="left:241px;top:543px;width:13px;height:13px;background:#fff;border:1px solid #6a6a6a;border-radius:2.5px"></div>
<svg class="a" style="left:274px;top:525px" width="50" height="50" viewBox="0 0 50 50"><rect width="50" height="50" fill="#fff"/><rect x="10" y="2.3" width="31.5" height="45.7" fill="#d99a3c"/><rect x="20" y="2.3" width="12" height="4" fill="#1b1b1b"/><path d="M20 6H32V11Q34 12.5 40 13.5V41H12V13.5Q18 12.5 20 11Z" fill="#2d2d28"/><rect x="13" y="16" width="26" height="2" fill="#4a4a40"/><rect x="15" y="20" width="22" height="3" fill="#222"/><rect x="15" y="23" width="22" height="3" fill="#6a5a3a" opacity=".6"/><circle cx="18" cy="31" r="3.5" fill="none" stroke="#8a6a40" stroke-width="1.2"/><circle cx="25" cy="31" r="3.5" fill="none" stroke="#8a6a40" stroke-width="1.2"/><circle cx="32" cy="31" r="3.5" fill="none" stroke="#8a6a40" stroke-width="1.2"/><rect x="12" y="41" width="28" height="4.5" fill="#2a2118"/><rect x="11" y="45.5" width="29" height="2" fill="#5a4a30"/></svg>
<div class="a" style="left:345px;top:530px;font-size:14.7px;line-height:20px;color:#333;letter-spacing:0.273px">Bán Niềm Tin</div>
<div class="a" style="left:345px;top:554px;font-size:11.2px;line-height:14px;color:#999">0 sản phẩm con, ID: 51375</div>
<div class="a" style="left:990px;top:533px;width:34px;height:33.5px;background:#fff;border:1px solid #cccccc;border-radius:3px;font-size:14.5px;line-height:32px;text-align:center;color:#333">0</div>
<div class="a" style="left:1056px;top:543px;font-size:14.5px;line-height:17px;color:#333">-</div>
<div class="a" style="left:1221px;top:543px;width:20px;text-align:center;font-size:14.5px;line-height:17px;color:#333">-</div>
<svg class="a" style="left:1303px;top:541px" width="24" height="17" viewBox="0 0 24 17"><g fill="#1aa3f5"><rect x="1.9" y="6.8" width="5.9" height="1.8" rx=".8"/><rect x="3.9" y="6.8" width="2.1" height="9.1" rx=".6"/><rect x="9" y="7" width="1.9" height="8.9" rx=".6"/><rect x="12.1" y="7" width="1.9" height="8.9" rx=".6"/><rect x="20" y="7" width="2" height="8.9" rx=".6"/></g><path d="M13.5 12.2L18.8 7.2M14.2 11.3L18.9 15.6" stroke="#1aa3f5" stroke-width="2" stroke-linecap="round"/><circle cx="9.8" cy="3.4" r="1.6" stroke="#1aa3f5" stroke-width="1.2" fill="none"/><circle cx="21.1" cy="3.4" r="1.6" stroke="#1aa3f5" stroke-width="1.2" fill="none"/><path d="M8.2 3.2A1.6 1.6 0 0 1 11.4 3.2ZM19.5 3.2A1.6 1.6 0 0 1 22.7 3.2Z" fill="#1aa3f5"/></svg>
<div class="a" style="left:1346px;top:532px;width:120px;text-align:center;font-size:14.5px;line-height:17px;color:#333">110.000đ</div>
<div class="a" style="left:1346px;top:553px;width:120px;text-align:center;font-size:13.5px;line-height:16px;color:#444;text-decoration:line-through">138.000đ</div>
<div class="a" style="left:1481.5px;top:547.7px;width:3px;height:3.3px;background:#111"></div>
<div class="a" style="left:1485.5px;top:547.7px;width:3px;height:3.3px;background:#111"></div>
<div class="a" style="left:1489.5px;top:547.7px;width:3px;height:3.3px;background:#111"></div>
<div class="a" style="left:191px;top:590px;width:20px;height:20px;background:#fff;border:1px solid #cfcfcf;border-radius:3px"></div>
<svg class="a" style="left:194px;top:599.8px" width="14" height="6" viewBox="0 0 14 6"><path d="M2.4 4.4L6.7 0.1L11 4.4Z" fill="#222"/></svg>
<div class="a" style="left:191px;top:612px;width:20px;height:20px;background:#fff;border:1px solid #cfcfcf;border-radius:3px"></div>
<svg class="a" style="left:194px;top:621.8px" width="14" height="6" viewBox="0 0 14 6"><path d="M2.4 0.2L6.7 4.6L11 0.2Z" fill="#222"/></svg>
<div class="a" style="left:241px;top:603px;width:13px;height:13px;background:#fff;border:1px solid #6a6a6a;border-radius:2.5px"></div>
<svg class="a" style="left:274px;top:585px" width="50" height="50" viewBox="0 0 50 50"><defs><linearGradient id="lg" x1="1" y1="0" x2="0" y2="1"><stop offset="0" stop-color="#2a8ad8"/><stop offset=".35" stop-color="#17306a"/><stop offset="1" stop-color="#0e1c4a"/></linearGradient></defs><rect width="50" height="50" fill="#fff"/><rect x="9.8" y="2" width="30.5" height="46" fill="url(#lg)"/><rect x="12" y="5.0" width="20.0" height="0.8" fill="#8fa8d8" opacity=".8"/><rect x="12" y="7.1" width="26.0" height="0.8" fill="#8fa8d8" opacity=".8"/><rect x="12" y="9.2" width="26.0" height="0.8" fill="#8fa8d8" opacity=".8"/><rect x="12" y="11.3" width="20.0" height="0.8" fill="#8fa8d8" opacity=".8"/><rect x="12" y="13.4" width="26.0" height="0.8" fill="#8fa8d8" opacity=".8"/><rect x="12" y="15.5" width="26.0" height="0.8" fill="#8fa8d8" opacity=".8"/><rect x="12" y="17.6" width="20.0" height="0.8" fill="#8fa8d8" opacity=".8"/><rect x="12" y="19.7" width="26.0" height="0.8" fill="#8fa8d8" opacity=".8"/><rect x="12" y="21.8" width="26.0" height="0.8" fill="#8fa8d8" opacity=".8"/><circle cx="25" cy="25" r="2" fill="none" stroke="#ccd" stroke-width=".8"/><rect x="12" y="30.0" width="26" height="0.8" fill="#7f90c0" opacity=".7"/><rect x="12" y="32.0" width="26" height="0.8" fill="#7f90c0" opacity=".7"/><rect x="12" y="34.0" width="26" height="0.8" fill="#7f90c0" opacity=".7"/><rect x="12" y="36.0" width="26" height="0.8" fill="#7f90c0" opacity=".7"/><rect x="12" y="40" width="10" height="1" fill="#5a8ac8"/><circle cx="13.5" cy="44" r="1.5" fill="#d0a040"/><rect x="32" y="40.5" width="7.5" height="5" fill="#e8e8e0"/></svg>
<div class="a" style="left:345px;top:590px;font-size:14.7px;line-height:20px;color:#333;letter-spacing:0.000px">Launch - Tung Sản Phẩm</div>
<div class="a" style="left:345px;top:614px;font-size:11.2px;line-height:14px;color:#999">0 sản phẩm con, ID: 51374</div>
<div class="a" style="left:990px;top:593px;width:34px;height:33.5px;background:#fff;border:1px solid #cccccc;border-radius:3px;font-size:14.5px;line-height:32px;text-align:center;color:#333">0</div>
<div class="a" style="left:1056px;top:603px;font-size:14.5px;line-height:17px;color:#333">-</div>
<div class="a" style="left:1221px;top:603px;width:20px;text-align:center;font-size:14.5px;line-height:17px;color:#333">-</div>
<svg class="a" style="left:1303px;top:601px" width="24" height="17" viewBox="0 0 24 17"><g fill="#1aa3f5"><rect x="1.9" y="6.8" width="5.9" height="1.8" rx=".8"/><rect x="3.9" y="6.8" width="2.1" height="9.1" rx=".6"/><rect x="9" y="7" width="1.9" height="8.9" rx=".6"/><rect x="12.1" y="7" width="1.9" height="8.9" rx=".6"/><rect x="20" y="7" width="2" height="8.9" rx=".6"/></g><path d="M13.5 12.2L18.8 7.2M14.2 11.3L18.9 15.6" stroke="#1aa3f5" stroke-width="2" stroke-linecap="round"/><circle cx="9.8" cy="3.4" r="1.6" stroke="#1aa3f5" stroke-width="1.2" fill="none"/><circle cx="21.1" cy="3.4" r="1.6" stroke="#1aa3f5" stroke-width="1.2" fill="none"/><path d="M8.2 3.2A1.6 1.6 0 0 1 11.4 3.2ZM19.5 3.2A1.6 1.6 0 0 1 22.7 3.2Z" fill="#1aa3f5"/></svg>
<div class="a" style="left:1346px;top:592px;width:120px;text-align:center;font-size:14.5px;line-height:17px;color:#333">134.000đ</div>
<div class="a" style="left:1346px;top:613px;width:120px;text-align:center;font-size:13.5px;line-height:16px;color:#444;text-decoration:line-through">168.000đ</div>
<div class="a" style="left:1481.5px;top:607.7px;width:3px;height:3.3px;background:#111"></div>
<div class="a" style="left:1485.5px;top:607.7px;width:3px;height:3.3px;background:#111"></div>
<div class="a" style="left:1489.5px;top:607.7px;width:3px;height:3.3px;background:#111"></div>
<div class="a" style="left:171px;top:640px;width:1356px;height:60px;background:#f9f9f9"></div>
<div class="a" style="left:191px;top:650px;width:20px;height:20px;background:#fff;border:1px solid #cfcfcf;border-radius:3px"></div>
<svg class="a" style="left:194px;top:659.8px" width="14" height="6" viewBox="0 0 14 6"><path d="M2.4 4.4L6.7 0.1L11 4.4Z" fill="#222"/></svg>
<div class="a" style="left:191px;top:672px;width:20px;height:20px;background:#fff;border:1px solid #cfcfcf;border-radius:3px"></div>
<svg class="a" style="left:194px;top:681.8px" width="14" height="6" viewBox="0 0 14 6"><path d="M2.4 0.2L6.7 4.6L11 0.2Z" fill="#222"/></svg>
<div class="a" style="left:241px;top:663px;width:13px;height:13px;background:#fff;border:1px solid #6a6a6a;border-radius:2.5px"></div>
<svg class="a" style="left:274px;top:645px" width="50" height="50" viewBox="0 0 50 50"><rect width="50" height="50" fill="#fff"/><rect x="10" y="2.5" width="25" height="0.8" fill="#888"/><rect x="3" y="6" width="43" height="3" fill="#e88a9a" opacity=".85"/><rect x="21" y="10.5" width="24" height="0.8" fill="#999"/><circle cx="16.5" cy="14.5" r="2.8" fill="#e8c8b0"/><path d="M8 19Q12 17.5 22 18.5Q25 22 24 30L22 32V47H17L16 41L11 47H6L10 37L6.5 31Z" fill="#1a2238"/><rect x="15.5" y="19.5" width="2.5" height="4" fill="#c8d0e8"/><ellipse cx="35.5" cy="19" rx="5.5" ry="3.5" fill="#f5a52a"/><rect x="24" y="27" width="17" height="2" fill="#8ab8e8" opacity=".7"/><rect x="22" y="31.5" width="24" height="2" fill="#8ab8e8" opacity=".7"/><rect x="22" y="36" width="24" height="2" fill="#8ab8e8" opacity=".7"/><rect x="23" y="41" width="16" height="0.9" fill="#e07080"/><rect x="18" y="43" width="22" height="0.9" fill="#e07080"/><rect x="28" y="46" width="4" height="1.2" fill="#f07a30"/><rect x="35" y="46" width="4" height="1.2" fill="#e03030"/></svg>
<div class="a" style="left:345px;top:650px;font-size:14.7px;line-height:20px;color:#333;letter-spacing:-0.025px">Những Nguyên Tắc Thành Công - Vươn Tới Đỉnh Cao Từ Xuất Phát Điểm Hiện Tại</div>
<div class="a" style="left:345px;top:674px;font-size:11.2px;line-height:14px;color:#999">0 sản phẩm con, ID: 51373</div>
<div class="a" style="left:990px;top:653px;width:34px;height:33.5px;background:#fff;border:1px solid #cccccc;border-radius:3px;font-size:14.5px;line-height:32px;text-align:center;color:#333">0</div>
<div class="a" style="left:1056px;top:663px;font-size:14.5px;line-height:17px;color:#333">-</div>
<div class="a" style="left:1221px;top:663px;width:20px;text-align:center;font-size:14.5px;line-height:17px;color:#333">-</div>
<svg class="a" style="left:1303px;top:661px" width="24" height="17" viewBox="0 0 24 17"><g fill="#1aa3f5"><rect x="1.9" y="6.8" width="5.9" height="1.8" rx=".8"/><rect x="3.9" y="6.8" width="2.1" height="9.1" rx=".6"/><rect x="9" y="7" width="1.9" height="8.9" rx=".6"/><rect x="12.1" y="7" width="1.9" height="8.9" rx=".6"/><rect x="20" y="7" width="2" height="8.9" rx=".6"/></g><path d="M13.5 12.2L18.8 7.2M14.2 11.3L18.9 15.6" stroke="#1aa3f5" stroke-width="2" stroke-linecap="round"/><circle cx="9.8" cy="3.4" r="1.6" stroke="#1aa3f5" stroke-width="1.2" fill="none"/><circle cx="21.1" cy="3.4" r="1.6" stroke="#1aa3f5" stroke-width="1.2" fill="none"/><path d="M8.2 3.2A1.6 1.6 0 0 1 11.4 3.2ZM19.5 3.2A1.6 1.6 0 0 1 22.7 3.2Z" fill="#1aa3f5"/></svg>
<div class="a" style="left:1346px;top:652px;width:120px;text-align:center;font-size:14.5px;line-height:17px;color:#333">100.000đ</div>
<div class="a" style="left:1346px;top:673px;width:120px;text-align:center;font-size:13.5px;line-height:16px;color:#444;text-decoration:line-through">125.000đ</div>
<div class="a" style="left:1481.5px;top:667.7px;width:3px;height:3.3px;background:#111"></div>
<div class="a" style="left:1485.5px;top:667.7px;width:3px;height:3.3px;background:#111"></div>
<div class="a" style="left:1489.5px;top:667.7px;width:3px;height:3.3px;background:#111"></div>
<div class="a" style="left:191px;top:710px;width:20px;height:20px;background:#fff;border:1px solid #cfcfcf;border-radius:3px"></div>
<svg class="a" style="left:194px;top:719.8px" width="14" height="6" viewBox="0 0 14 6"><path d="M2.4 4.4L6.7 0.1L11 4.4Z" fill="#222"/></svg>
<div class="a" style="left:191px;top:732px;width:20px;height:20px;background:#fff;border:1px solid #cfcfcf;border-radius:3px"></div>
<svg class="a" style="left:194px;top:741.8px" width="14" height="6" viewBox="0 0 14 6"><path d="M2.4 0.2L6.7 4.6L11 0.2Z" fill="#222"/></svg>
<div class="a" style="left:241px;top:723px;width:13px;height:13px;background:#0b6ef7;border-radius:2.5px"></div>
<svg class="a" style="left:241px;top:723px" width="13" height="13" viewBox="0 0 13 13"><path d="M3 6.5L5.5 9L10 3.8" stroke="#fff" stroke-width="1.8" fill="none"/></svg>
<svg class="a" style="left:274px;top:705px" width="50" height="50" viewBox="0 0 50 50"><rect width="50" height="50" fill="#fff"/><g transform="rotate(-9 25 25)"><rect x="4" y="16" width="44" height="19" rx="1" fill="#b88a55"/><rect x="4" y="16" width="44" height="5" fill="#9ccf7a"/><rect x="4" y="16" width="9" height="19" fill="#a8d890"/><rect x="17" y="18" width="20" height="7" fill="#a87a48"/><rect x="21" y="20" width="10" height="1" fill="#4a3a2a"/><rect x="21" y="22.5" width="10" height="1" fill="#4a3a2a"/><circle cx="40" cy="27" r="4" fill="#f0a030"/><circle cx="12" cy="23" r="1.8" fill="#e85a20"/><circle cx="10" cy="30" r="2" fill="#f08a20"/><rect x="18" y="26" width="10" height="4" fill="#c8e0a0"/><rect x="4" y="33.5" width="44" height="1.5" fill="#8cc070"/></g></svg>
<div class="a" style="left:345px;top:710px;font-size:14.7px;line-height:20px;color:#333;letter-spacing:-0.231px">Bộ Thẻ Học Song Ngữ Guess-Silde Cards - Đây Là Loại Rau Củ Gì Nhỉ?</div>
<div class="a" style="left:345px;top:734px;font-size:11.2px;line-height:14px;color:#999">0 sản phẩm con, ID: 51372</div>
<div class="a" style="left:990px;top:713px;width:34px;height:33.5px;background:#fff;border:1px solid #cccccc;border-radius:3px;font-size:14.5px;line-height:32px;text-align:center;color:#333">0</div>
<div class="a" style="left:1056px;top:723px;font-size:14.5px;line-height:17px;color:#333">-</div>
<div class="a" style="left:1221px;top:723px;width:20px;text-align:center;font-size:14.5px;line-height:17px;color:#333">-</div>
<svg class="a" style="left:1303px;top:721px" width="24" height="17" viewBox="0 0 24 17"><g fill="#1aa3f5"><rect x="1.9" y="6.8" width="5.9" height="1.8" rx=".8"/><rect x="3.9" y="6.8" width="2.1" height="9.1" rx=".6"/><rect x="9" y="7" width="1.9" height="8.9" rx=".6"/><rect x="12.1" y="7" width="1.9" height="8.9" rx=".6"/><rect x="20" y="7" width="2" height="8.9" rx=".6"/></g><path d="M13.5 12.2L18.8 7.2M14.2 11.3L18.9 15.6" stroke="#1aa3f5" stroke-width="2" stroke-linecap="round"/><circle cx="9.8" cy="3.4" r="1.6" stroke="#1aa3f5" stroke-width="1.2" fill="none"/><circle cx="21.1" cy="3.4" r="1.6" stroke="#1aa3f5" stroke-width="1.2" fill="none"/><path d="M8.2 3.2A1.6 1.6 0 0 1 11.4 3.2ZM19.5 3.2A1.6 1.6 0 0 1 22.7 3.2Z" fill="#1aa3f5"/></svg>
<div class="a" style="left:1346px;top:712px;width:120px;text-align:center;font-size:14.5px;line-height:17px;color:#333">169.000đ</div>
<div class="a" style="left:1346px;top:733px;width:120px;text-align:center;font-size:13.5px;line-height:16px;color:#444;text-decoration:line-through">98.000đ</div>
<div class="a" style="left:1481.5px;top:727.7px;width:3px;height:3.3px;background:#111"></div>
<div class="a" style="left:1485.5px;top:727.7px;width:3px;height:3.3px;background:#111"></div>
<div class="a" style="left:1489.5px;top:727.7px;width:3px;height:3.3px;background:#111"></div>
<div class="a" style="left:171px;top:760px;width:1356px;height:60px;background:#f9f9f9"></div>
<div class="a" style="left:191px;top:770px;width:20px;height:20px;background:#fff;border:1px solid #cfcfcf;border-radius:3px"></div>
<svg class="a" style="left:194px;top:779.8px" width="14" height="6" viewBox="0 0 14 6"><path d="M2.4 4.4L6.7 0.1L11 4.4Z" fill="#222"/></svg>
<div class="a" style="left:191px;top:792px;width:20px;height:20px;background:#fff;border:1px solid #cfcfcf;border-radius:3px"></div>
<svg class="a" style="left:194px;top:801.8px" width="14" height="6" viewBox="0 0 14 6"><path d="M2.4 0.2L6.7 4.6L11 0.2Z" fill="#222"/></svg>
<div class="a" style="left:241px;top:783px;width:13px;height:13px;background:#fff;border:1px solid #6a6a6a;border-radius:2.5px"></div>
<svg class="a" style="left:274px;top:765px" width="50" height="50" viewBox="0 0 50 50"><rect x="8.1" y="8.5" width="13" height="34.5" fill="#3d5a1e"/><rect x="10" y="13" width="9" height="4" fill="#d8e0c8" opacity=".6"/><rect x="10" y="23" width="9" height="11" fill="#b9c840"/><rect x="10" y="33" width="9" height="4" fill="#a86a30"/><rect x="10" y="39" width="8" height="2" fill="#4ab070"/><rect x="24.5" y="11" width="3" height="3" fill="#111"/><path d="M22.5 43.5V19Q22.5 16 25 15.5Q28 16 29 19V43.5Z" fill="#1e3a24"/><rect x="23.5" y="32" width="5" height="7" fill="#a8c040"/><rect x="29.5" y="15.2" width="9.7" height="28" rx="2" fill="#23452a"/><rect x="31" y="31" width="6.5" height="7" fill="#a8c040"/></svg>
<div class="a" style="left:345px;top:770px;font-size:14.7px;line-height:20px;color:#333;letter-spacing:0.076px">Dầu gội dược liệu Nguyên Xuân Xanh</div>
<div class="a" style="left:345px;top:794px;font-size:11.2px;line-height:14px;color:#999">0 sản phẩm con, ID: 50642</div>
<div class="a" style="left:978px;top:773px;width:58px;height:33.5px;background:#fff;border:1px solid #cccccc;border-radius:3px;font-size:14.5px;line-height:32px;text-align:center;color:#333">1000</div>
<div class="a" style="left:1056px;top:782px;font-size:14.5px;line-height:17px;color:#333">Phòng khách</div>
<div class="a" style="left:1221px;top:783px;width:20px;text-align:center;font-size:14.5px;line-height:17px;color:#333">-</div>
<div class="a" style="left:1307px;top:783px;width:20px;text-align:center;font-size:14.5px;line-height:17px;color:#333">-</div>
<div class="a" style="left:1346px;top:772px;width:120px;text-align:center;font-size:14.5px;line-height:17px;color:#333">122.000đ</div>
<div class="a" style="left:1346px;top:793px;width:120px;text-align:center;font-size:13.5px;line-height:16px;color:#444;text-decoration:line-through">145.000đ</div>
<div class="a" style="left:1481.5px;top:787.7px;width:3px;height:3.3px;background:#111"></div>
<div class="a" style="left:1485.5px;top:787.7px;width:3px;height:3.3px;background:#111"></div>
<div class="a" style="left:1489.5px;top:787.7px;width:3px;height:3.3px;background:#111"></div>
<div class="a" style="left:191px;top:830px;width:20px;height:10px;background:#fff;border:1px solid #cfcfcf;border-radius:3px"></div>
<div class="a" style="left:274px;top:825px;width:50px;height:10px;background:#fff"></div>
<svg class="a" style="left:290px;top:825px" width="14" height="8" viewBox="0 0 14 8"><path d="M1.5 1.2H12.5L11.5 2.5H8.5L10 8H4L5.5 2.5H2.5Z" fill="#2a2a2a"/></svg>
<div class="a" style="left:0;top:831.5px;width:1552px;height:1.5px;background:#1c2a36"></div>
<div class="a" style="left:1327px;top:164px;width:200px;height:60px;background:#fff;border:1px solid #d0d0d0;box-shadow:0 3px 6px rgba(0,0,0,.12)"></div>
<div class="a" style="left:1339px;top:175px;font-size:13.3px;line-height:16px;color:#333">Đồng bộ sản phẩm về SaleKit</div>
<div class="a" style="left:1328px;top:196px;width:198px;height:27px;background:#4f96c9"></div>
<div class="a" style="left:1339px;top:202px;font-size:13.3px;line-height:16px;color:#222;letter-spacing:0.08px">Đồng bộ sản phẩm lên sàn</div>
<div class="a" style="left:1318px;top:188px;width:217px;height:43px;border:7px solid #ff0000;border-radius:4px"></div>
<div class="a" style="left:220px;top:710px;width:53px;height:42px;border:9px solid #ff0000;border-radius:5px"></div>
<svg class="a" style="left:0;top:0" width="1552" height="833" viewBox="0 0 1552 833"><path d="M1100.5 350.5L1286 240" stroke="#ff0000" stroke-width="6.5" stroke-linecap="round"/><path d="M1278 232.5L1314 223.5L1290.5 249.5Z" fill="#ff0000" stroke="#ff0000" stroke-width="1.5" stroke-linejoin="round"/></svg>
</body></html>
